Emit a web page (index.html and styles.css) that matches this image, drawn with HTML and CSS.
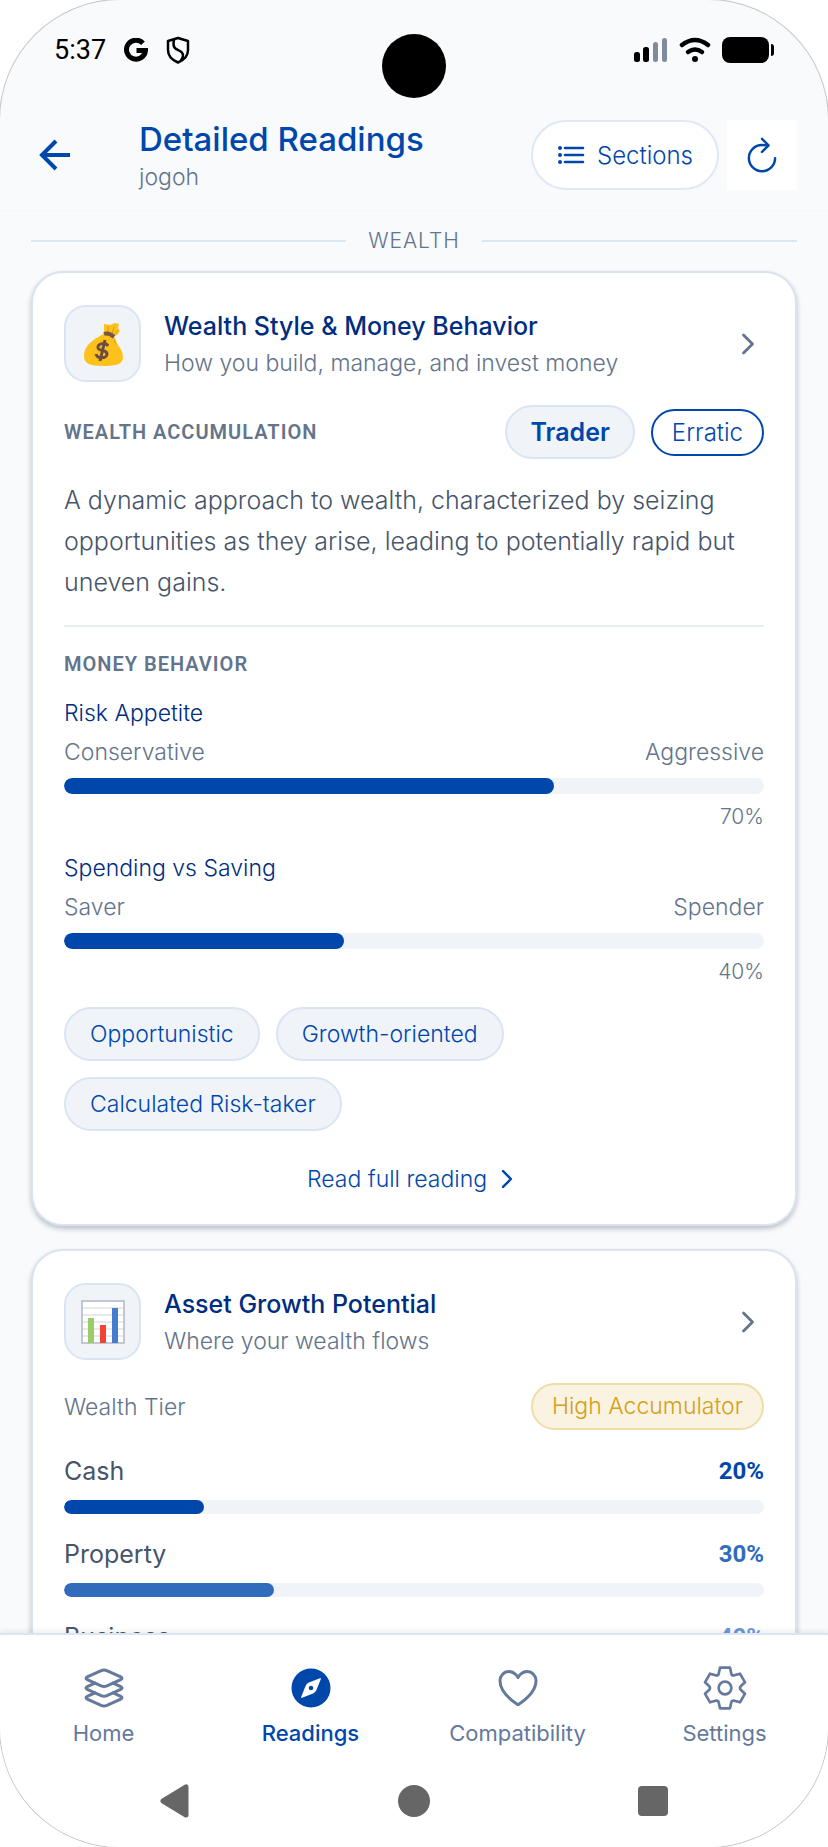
FILE: index.html
```
<!DOCTYPE html>
<html lang="en">
<head>
    <meta charset="UTF-8">
    <meta name="viewport" content="width=device-width, initial-scale=1.0">
    <title>Detailed Readings</title>
    <link rel="stylesheet" href="styles.css">
</head>
<body>
    <div class="phone">
        <!-- Status bar -->
        <div class="status-bar">
            <div class="status-left">
                <span class="clock">5:37</span>
                <svg width="24" height="24" viewBox="0 0 24 24" fill="none" stroke="#000" stroke-width="5"><path d="M19 5.200A9.500 9.500 0 1 0 21.500 12.500H12.500"/></svg>
                <svg width="24" height="28" viewBox="0 0 24 28" fill="none" stroke="#000" stroke-width="2.500" stroke-linejoin="round"><path d="M12 2L22 5V14C22 20 18 24 12 26.500C6 24 2 20 2 14V5Z"/><path d="M8 4C6 12 10 13 13 14.500C18 17 18 20 15 24.500"/></svg>
            </div>
            <div class="camera"></div>
            <div class="status-right">
                <svg width="34" height="26" viewBox="0 0 34 26"><rect x="0" y="15" width="6" height="10" rx="2.500"/><rect x="9" y="10" width="6" height="15" rx="2.500"/><rect x="19" y="5" width="5" height="20" rx="2.500" fill="#7f8a9f"/><rect x="28" y="1" width="5" height="24" rx="2.500" fill="#7f8a9f"/></svg>
                <svg width="32" height="26" viewBox="0 0 32 26" fill="none" stroke="#000" stroke-width="4.500" stroke-linecap="round"><path d="M3 8Q16-2 29 8"/><path d="M9 15Q16 10 23 15"/><circle cx="16" cy="22" r="3" fill="#000" stroke="none"/></svg>
                <svg width="52" height="26" viewBox="0 0 52 26"><rect width="47" height="26" rx="8"/><path d="M49 7Q52 7 52 10V16Q52 19 49 19Z"/></svg>
            </div>
        </div>

        <!-- Header -->
        <header class="header">
            <button class="back-btn" aria-label="Back">
                <svg width="32" height="32" viewBox="0 0 32 32" fill="none" stroke="#0047ab" stroke-width="4"><path d="M17 2L3 16L17 30M3 16H31"/></svg>
            </button>
            <div class="header-text">
                <h1>Detailed Readings</h1>
                <p>jogoh</p>
            </div>
            <button class="sections-btn">
                <svg width="28" height="28" viewBox="0 0 28 28" fill="none" stroke="#0047ab" stroke-width="2.600" stroke-linecap="round"><path d="M8 7H26M8 14H26M8 21H26"/><path stroke-width="4" d="M3 7H3.010M3 14H3.010M3 21H3.010"/></svg>
                Sections
            </button>
            <button class="refresh-btn" aria-label="Refresh">
                <svg width="42" height="42" viewBox="0 0 512 512" fill="none" stroke="#0047ab" stroke-width="30" stroke-linecap="round" stroke-linejoin="round"><path d="M320 146s24.360-12-64-12a160 160 0 10160 160"/><path d="M256 58l80 80-80 80"/></svg>
            </button>
        </header>

        <!-- Scrolling content -->
        <main class="content">
            <h2 class="section-label">WEALTH</h2>

            <section class="card">
                <button class="card-header">
                    <span class="card-icon">
                        <svg width="44" height="44" viewBox="0 0 44 44">
                            <path fill="#fcc21b" d="M22 12C18 15 3 21 3 34C3 41 8 44 22 44C36 44 42 42 42 35C42 27 36 24 34 16C32 12 26 11 22 12Z"/>
                            <path fill="#fcc21b" d="M23 11L23 2L29 3L34 1L38 2L37 6L39 9L36 13L31 14Z"/>
                            <path d="M33 5L31 13M37 8L33 13M27 4V10" fill="none" stroke="#d59a0b" stroke-width="1"/>
                            <path d="M34 16Q34 22 37 25L33 20Z" fill="#e2a610"/>
                            <path d="M23 12Q28 10 33 15" fill="none" stroke="#795548" stroke-width="4"/>
                            <path d="M27 24C25 20 16 21 17 26C18 30 26 27 26 32C26 37 16 37 15 32M24 18L19 39" fill="none" stroke="#6d4c41" stroke-width="3"/>
                        </svg>
                    </span>
                    <span class="card-titles">
                        <span class="card-title">Wealth Style &amp; Money Behavior</span>
                        <span class="card-sub">How you build, manage, and invest money</span>
                    </span>
                    <svg class="chevron" width="32" height="32" viewBox="0 0 512 512"><path d="M184 112l144 144-144 144"/></svg>
                </button>

                <div class="row accumulation">
                    <h3 class="caps">WEALTH ACCUMULATION</h3>
                    <span class="pill pill-strong">Trader</span>
                    <span class="pill pill-outline">Erratic</span>
                </div>
                <p class="description">A dynamic approach to wealth, characterized by seizing opportunities as they arise, leading to potentially rapid but uneven gains.</p>

                <div class="money">
                    <h3 class="caps">MONEY BEHAVIOR</h3>
                    <div class="scale">
                        <div class="scale-name">Risk Appetite</div>
                        <div class="scale-ends"><span>Conservative</span><span>Aggressive</span></div>
                        <div class="bar"><div class="bar-fill" style="width: 70%"></div></div>
                        <div class="scale-value">70%</div>
                    </div>
                    <div class="scale">
                        <div class="scale-name">Spending vs Saving</div>
                        <div class="scale-ends"><span>Saver</span><span>Spender</span></div>
                        <div class="bar"><div class="bar-fill" style="width: 40%"></div></div>
                        <div class="scale-value">40%</div>
                    </div>
                </div>

                <div class="chips">
                    <span class="pill">Opportunistic</span>
                    <span class="pill">Growth-oriented</span>
                    <span class="pill">Calculated Risk-taker</span>
                </div>
                <button class="read-more">
                    Read full reading
                    <svg class="chevron" width="28" height="28" viewBox="0 0 512 512"><path d="M184 112l144 144-144 144"/></svg>
                </button>
            </section>

            <section class="card">
                <button class="card-header">
                    <span class="card-icon">
                        <svg width="44" height="44" viewBox="0 0 44 44">
                            <rect x="1" y="1" width="42" height="42" fill="#fff"/>
                            <path d="M1 8H43M1 15H43M1 22H43M1 29H43M1 36H43" stroke="#cfd3da" stroke-width="1"/>
                            <rect x="1" y="1" width="42" height="42" fill="none" stroke="#b0b8c4" stroke-width="1.500"/>
                            <rect x="7" y="18" width="6" height="25" fill="#9ccc65"/>
                            <rect x="19" y="25" width="6" height="18" fill="#f44336"/>
                            <rect x="31" y="8" width="6" height="35" fill="#437dcb"/>
                        </svg>
                    </span>
                    <span class="card-titles">
                        <span class="card-title">Asset Growth Potential</span>
                        <span class="card-sub">Where your wealth flows</span>
                    </span>
                    <svg class="chevron" width="32" height="32" viewBox="0 0 512 512"><path d="M184 112l144 144-144 144"/></svg>
                </button>
                <div class="row tier">
                    <span class="tier-label">Wealth Tier</span>
                    <span class="pill pill-gold">High Accumulator</span>
                </div>
                <div class="assets">
                    <div class="asset cash">
                        <div class="asset-head"><span>Cash</span><strong>20%</strong></div>
                        <div class="bar"><div class="bar-fill" style="width: 20%"></div></div>
                    </div>
                    <div class="asset property">
                        <div class="asset-head"><span>Property</span><strong>30%</strong></div>
                        <div class="bar"><div class="bar-fill" style="width: 30%"></div></div>
                    </div>
                    <div class="asset business">
                        <div class="asset-head"><span>Business</span><strong>40%</strong></div>
                        <div class="bar"><div class="bar-fill" style="width: 40%"></div></div>
                    </div>
                </div>
            </section>
        </main>

        <!-- Bottom tabs -->
        <nav class="tabs">
            <a href="#" class="tab">
                <svg width="48" height="48" viewBox="0 0 512 512"><path d="M434.800 137.650l-149.360-68.100c-16.190-7.400-42.690-7.400-58.880 0L77.300 137.650c-17.600 8-17.600 21.090 0 29.090l148 67.500c16.890 7.700 44.690 7.700 61.580 0l148-67.500c17.520-8 17.520-21.100-.080-29.090zM160 308.520l-82.700 37.110c-17.600 8-17.600 21.100 0 29.100l148 67.500c16.890 7.690 44.690 7.690 61.580 0l148-67.500c17.600-8 17.600-21.100 0-29.100l-79.940-38.470"/><path d="M160 204.480l-82.800 37.160c-17.600 8-17.600 21.100 0 29.100l148 67.490c16.890 7.700 44.690 7.700 61.580 0l148-67.490c17.700-8 17.700-21.100.100-29.100L352 204.480"/></svg>
                Home
            </a>
            <a href="#" class="tab active">
                <svg width="48" height="48" viewBox="0 0 512 512"><circle cx="256" cy="256" r="208"/><path class="needle" d="M361 161l-47 117a64 64 0 01-36 36l-117 47a8 8 0 01-10-10l47-117a64 64 0 0136-36l117-47a8 8 0 0110 10z"/><circle cx="256" cy="256" r="24"/></svg>
                Readings
            </a>
            <a href="#" class="tab">
                <svg width="48" height="48" viewBox="0 0 512 512"><path d="M352.920 80C288 80 256 144 256 144s-32-64-96.920-64c-52.760 0-94.540 44.140-95.080 96.810-1.100 109.330 86.730 187.080 183 252.420a16 16 0 0018 0c96.260-65.340 184.090-143.090 183-252.420-.540-52.670-42.320-96.810-95.080-96.810z"/></svg>
                Compatibility
            </a>
            <a href="#" class="tab">
                <svg class="gear" width="48" height="48" viewBox="-72 -72 144 144"><path d="M-19-43L-15-61H15L19-43Q20-37 28-38L45-43L60-17L47-5Q43 0 47 5L60 17L45 43L28 38Q20 37 19 43L15 61H-15L-19 43Q-20 37-28 38L-45 43L-60 17L-47 5Q-43 0-47-5L-60-17L-45-43L-28-38Q-20-37-19-43Z"/><circle r="19"/></svg>
                Settings
            </a>
        </nav>

        <!-- System navigation -->
        <div class="system-nav">
            <button aria-label="System back"><svg width="34" height="34" viewBox="0 0 34 34"><path d="M28 3V31L5 17Z" stroke="#666" stroke-width="5" stroke-linejoin="round"/></svg></button>
            <button aria-label="System home"><svg width="34" height="34" viewBox="0 0 34 34"><circle cx="17" cy="17" r="16"/></svg></button>
            <button aria-label="Recent apps"><svg width="34" height="34" viewBox="0 0 34 34"><rect x="2" y="2" width="30" height="30" rx="4"/></svg></button>
        </div>
    </div>
</body>
</html>
```
FILE: styles.css
```
* {
    box-sizing: border-box;
}
body {
    margin: 0;
    background: #fff;
    font-family: Inter, "Liberation Sans", sans-serif;
    font-weight: 300;
    color: #64748b;
}
h1, h2, h3, p {
    margin: 0;
}
button {
    font: inherit;
    color: inherit;
    background: none;
    border: none;
    padding: 0;
}
svg {
    flex: none;
}
.phone {
    position: relative;
    display: flex;
    flex-direction: column;
    height: 100vh;
    overflow: hidden;
    background: #f8fafc;
    border-radius: 120px;
    box-shadow: 0 0 0 1px #c4c6c9;
}

/* Status bar */
.status-bar {
    display: flex;
    justify-content: space-between;
    align-items: center;
    height: 100px;
    padding: 0 54px;
}
.status-left {
    display: flex;
    align-items: center;
    gap: 18px;
}
.status-right {
    display: flex;
    align-items: center;
    gap: 11px;
}
.clock {
    font-family: Roboto, sans-serif;
    font-size: 27px;
    font-weight: 400;
    color: #000;
}
.camera {
    position: absolute;
    top: 34px;
    left: 50%;
    width: 64px;
    height: 64px;
    margin-left: -32px;
    border-radius: 50%;
    background: #000;
}

/* Header */
.header {
    display: flex;
    align-items: center;
    height: 111px;
    padding: 0 31px;
    border-bottom: 1px solid #f5f7fa;
}
.back-btn {
    display: flex;
    align-items: center;
    width: 108px;
    height: 70px;
    padding-left: 8px;
}
.header-text {
    flex: 1;
    padding-top: 4px;
}
.header-text h1 {
    font-size: 33px;
    line-height: 40px;
    font-weight: 500;
    color: #0047ab;
    white-space: nowrap;
}
.header-text p {
    font-size: 23px;
    line-height: 36px;
}
.sections-btn {
    display: flex;
    align-items: center;
    gap: 12px;
    height: 70px;
    padding: 0 24px;
    font-size: 24px;
    color: #0047ab;
    background: #fff;
    border: 2px solid #e0e8f5;
    border-radius: 35px;
}
.refresh-btn {
    display: flex;
    align-items: center;
    justify-content: center;
    width: 70px;
    height: 70px;
    margin-left: 8px;
    background: #fff;
}

/* Content */
.content {
    flex: 1;
    min-height: 0;
    overflow: hidden;
    padding: 14px 31px 0;
}
.section-label {
    display: flex;
    align-items: center;
    gap: 22px;
    margin-bottom: 14px;
    font-size: 21px;
    line-height: 32px;
    font-weight: 300;
    letter-spacing: 1px;
}
.section-label::before,
.section-label::after {
    content: "";
    flex: 1;
    height: 2px;
    background: #dbe6f4;
}
.card {
    margin-bottom: 23px;
    padding: 32px 31px 21px;
    background: #fff;
    border: 2px solid #dae4f1;
    border-radius: 32px;
    box-shadow: 0 3px 5px rgba(15, 23, 42, 0.25);
}
.card-header {
    display: flex;
    align-items: center;
    gap: 23px;
    width: 100%;
    text-align: left;
}
.card-icon {
    display: flex;
    align-items: center;
    justify-content: center;
    width: 77px;
    height: 77px;
    background: #f0f4f9;
    border: 2px solid #dae4f3;
    border-radius: 22px;
}
.card-titles {
    flex: 1;
    padding-top: 3px;
}
.card-title,
.card-sub {
    display: block;
    line-height: 37px;
}
.card-title {
    font-size: 25px;
    font-weight: 500;
    color: #002d80;
}
.card-sub {
    font-size: 23px;
}
.chevron {
    fill: none;
    stroke: currentColor;
    stroke-width: 44;
    stroke-linecap: round;
    stroke-linejoin: round;
}
.row {
    display: flex;
    align-items: center;
    gap: 16px;
}
.accumulation {
    margin-top: 23px;
}
.caps {
    flex: 1;
    font-family: Roboto, sans-serif;
    font-size: 20px;
    line-height: 24px;
    font-weight: 600;
    letter-spacing: 1px;
}
.pill {
    padding: 0 24px;
    font-size: 23px;
    line-height: 50px;
    color: #0047ab;
    background: #f0f4f9;
    border: 2px solid #dae4f3;
    border-radius: 27px;
}
.pill-strong {
    padding: 0 23px;
    font-size: 25px;
    font-weight: 600;
}
.pill-outline,
.pill-gold {
    padding: 0 19px;
    line-height: 43px;
}
.pill-outline {
    font-size: 24px;
    background: #fff;
    border-color: #0047ab;
}
.pill-gold {
    color: #d4a017;
    background: #faf3e1;
    border-color: #efdca6;
}
.description {
    padding: 21px 0 22px;
    font-size: 25px;
    line-height: 41px;
    color: #475569;
    border-bottom: 2px solid #e6edf6;
}
.money {
    padding-top: 25px;
}
.money .caps {
    margin-bottom: 16px;
}
.scale {
    height: 155px;
    font-size: 23px;
}
.scale-name {
    line-height: 42px;
    color: #002d80;
}
.scale-ends {
    display: flex;
    justify-content: space-between;
    line-height: 36px;
    margin-bottom: 8px;
}
.scale-value {
    text-align: right;
    font-size: 21px;
    line-height: 46px;
}
.bar {
    height: 16px;
    background: #f0f4f9;
    border-radius: 8px;
    overflow: hidden;
}
.bar-fill {
    height: 100%;
    background: #0047ab;
    border-radius: 8px;
}
.chips {
    display: flex;
    flex-wrap: wrap;
    gap: 16px;
    padding-top: 5px;
}
.read-more {
    display: flex;
    align-items: center;
    justify-content: center;
    gap: 6px;
    width: 100%;
    margin-top: 24px;
    font-size: 23px;
    line-height: 48px;
    color: #0047ab;
}

/* Asset list */
.tier {
    justify-content: space-between;
    margin-top: 23px;
}
.tier-label {
    font-size: 23px;
}
.assets {
    display: flex;
    flex-direction: column;
    gap: 22px;
    padding-top: 23px;
}
.asset-head {
    display: flex;
    justify-content: space-between;
    margin-bottom: 10px;
    font-size: 25px;
    line-height: 37px;
    font-weight: 400;
    color: #475569;
}
.asset-head strong {
    font-family: Roboto, sans-serif;
    font-size: 24px;
    font-weight: 700;
    color: #0047ab;
}
.asset .bar {
    height: 14px;
}
.property strong {
    color: #316bbc;
}
.property .bar-fill {
    background: #316bbc;
}
.business strong {
    color: #6f98d3;
}
.business .bar-fill {
    background: #6f98d3;
}

/* Bottom tabs */
.tabs {
    position: relative;
    display: flex;
    height: 122px;
    padding-top: 29px;
    background: #fff;
    border-top: 2px solid #dbe6f5;
    box-shadow: 0 -2px 5px rgba(15, 23, 42, 0.08);
}
.tab {
    flex: 1;
    display: flex;
    flex-direction: column;
    align-items: center;
    gap: 6px;
    font-size: 22px;
    line-height: 30px;
    font-weight: 400;
    color: #64799b;
    text-decoration: none;
}
.tab svg {
    fill: none;
    stroke: currentColor;
    stroke-width: 32;
    stroke-linecap: round;
    stroke-linejoin: round;
}
.tab .gear {
    stroke-width: 8;
}
.tabs .active {
    font-weight: 500;
    color: #0047ab;
}
.active svg {
    fill: currentColor;
    stroke: none;
}
.active .needle {
    fill: #fff;
}

/* System navigation */
.system-nav {
    position: relative;
    display: flex;
    justify-content: center;
    gap: 205px;
    height: 92px;
    background: #fff;
}
.system-nav button {
    display: flex;
    align-items: center;
}
.system-nav svg {
    fill: #666;
}
```
